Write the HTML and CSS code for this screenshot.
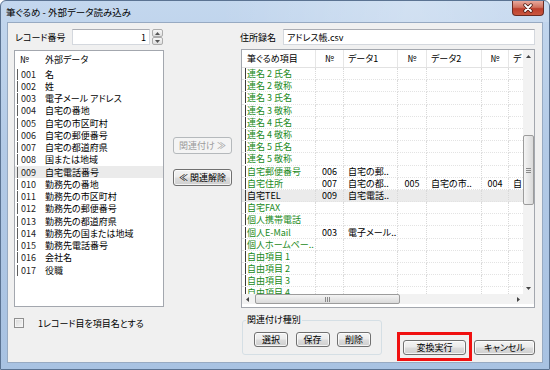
FILE: index.html
```html
<!DOCTYPE html>
<html>
<head>
	<meta charset="UTF-8">
	<title>筆ぐるめ - 外部データ読み込み</title>
	<link rel="stylesheet" href="styles.css">
</head>
<body>
<div class="window">
	<div class="titlebar">
		<span class="title">筆ぐるめ - 外部データ読み込み</span>
		<span class="close">
			<svg width="12" height="10" viewBox="0 0 12 10">
				<path d="M3 2 L9 8 M9 2 L3 8" stroke="#4a1c14" stroke-width="3.4" stroke-linecap="round"/>
				<path d="M3 2 L9 8 M9 2 L3 8" stroke="#fff" stroke-width="1.8" stroke-linecap="round"/>
			</svg>
		</span>
	</div>
	<div class="client">
		<div class="left">
			<div class="field-row">
				<span class="label">レコード番号</span>
				<span class="textbox num">1</span>
				<span class="spin">
					<span class="spin-btn"><svg width="5" height="3" viewBox="0 0 5 3"><path d="M0 3 L2.5 0 L5 3 Z" fill="#555"/></svg></span>
					<span class="spin-btn"><svg width="5" height="3" viewBox="0 0 5 3"><path d="M0 0 L2.5 3 L5 0 Z" fill="#555"/></svg></span>
				</span>
			</div>
			<div class="listbox">
				<div class="list-head"><span class="c-no">№</span><span>外部データ</span></div>
				<div class="list-row"><span class="c-no">001</span><span>名</span></div>
				<div class="list-row"><span class="c-no">002</span><span>姓</span></div>
				<div class="list-row"><span class="c-no">003</span><span>電子メール アドレス</span></div>
				<div class="list-row"><span class="c-no">004</span><span>自宅の番地</span></div>
				<div class="list-row"><span class="c-no">005</span><span>自宅の市区町村</span></div>
				<div class="list-row"><span class="c-no">006</span><span>自宅の郵便番号</span></div>
				<div class="list-row"><span class="c-no">007</span><span>自宅の都道府県</span></div>
				<div class="list-row"><span class="c-no">008</span><span>国または地域</span></div>
				<div class="list-row sel"><span class="c-no">009</span><span>自宅電話番号</span></div>
				<div class="list-row"><span class="c-no">010</span><span>勤務先の番地</span></div>
				<div class="list-row"><span class="c-no">011</span><span>勤務先の市区町村</span></div>
				<div class="list-row"><span class="c-no">012</span><span>勤務先の郵便番号</span></div>
				<div class="list-row"><span class="c-no">013</span><span>勤務先の都道府県</span></div>
				<div class="list-row"><span class="c-no">014</span><span>勤務先の国または地域</span></div>
				<div class="list-row"><span class="c-no">015</span><span>勤務先電話番号</span></div>
				<div class="list-row"><span class="c-no">016</span><span>会社名</span></div>
				<div class="list-row"><span class="c-no">017</span><span>役職</span></div>
			</div>
			<div class="check-row">
				<span class="checkbox"></span>
				<span>1レコード目を項目名とする</span>
			</div>
		</div>

		<div class="middle">
			<button type="button" class="btn disabled">関連付け ≫</button>
			<button type="button" class="btn">≪ 関連解除</button>
		</div>

		<div class="right">
			<div class="field-row">
				<span class="label">住所録名</span>
				<span class="textbox wide">アドレス帳.csv</span>
			</div>
			<div class="grid">
				<div class="view">
					<div class="ghead">
						<span class="cell w1 first">筆ぐるめ項目</span>
						<span class="cell w2">№</span>
						<span class="cell w3">データ1</span>
						<span class="cell w4">№</span>
						<span class="cell w5">データ2</span>
						<span class="cell w6">№</span>
						<span class="cell w7">デ</span>
					</div>
					<div class="grow"><span class="cell w1"><span class="name">連名 2 氏名</span></span><span class="cell w2"></span><span class="cell w3"></span><span class="cell w4"></span><span class="cell w5"></span><span class="cell w6"></span><span class="cell w7"></span></div>
					<div class="grow"><span class="cell w1"><span class="name">連名 2 敬称</span></span><span class="cell w2"></span><span class="cell w3"></span><span class="cell w4"></span><span class="cell w5"></span><span class="cell w6"></span><span class="cell w7"></span></div>
					<div class="grow"><span class="cell w1"><span class="name">連名 3 氏名</span></span><span class="cell w2"></span><span class="cell w3"></span><span class="cell w4"></span><span class="cell w5"></span><span class="cell w6"></span><span class="cell w7"></span></div>
					<div class="grow"><span class="cell w1"><span class="name">連名 3 敬称</span></span><span class="cell w2"></span><span class="cell w3"></span><span class="cell w4"></span><span class="cell w5"></span><span class="cell w6"></span><span class="cell w7"></span></div>
					<div class="grow"><span class="cell w1"><span class="name">連名 4 氏名</span></span><span class="cell w2"></span><span class="cell w3"></span><span class="cell w4"></span><span class="cell w5"></span><span class="cell w6"></span><span class="cell w7"></span></div>
					<div class="grow"><span class="cell w1"><span class="name">連名 4 敬称</span></span><span class="cell w2"></span><span class="cell w3"></span><span class="cell w4"></span><span class="cell w5"></span><span class="cell w6"></span><span class="cell w7"></span></div>
					<div class="grow"><span class="cell w1"><span class="name">連名 5 氏名</span></span><span class="cell w2"></span><span class="cell w3"></span><span class="cell w4"></span><span class="cell w5"></span><span class="cell w6"></span><span class="cell w7"></span></div>
					<div class="grow"><span class="cell w1"><span class="name">連名 5 敬称</span></span><span class="cell w2"></span><span class="cell w3"></span><span class="cell w4"></span><span class="cell w5"></span><span class="cell w6"></span><span class="cell w7"></span></div>
					<div class="grow"><span class="cell w1"><span class="name">自宅郵便番号</span></span><span class="cell w2">006</span><span class="cell w3">自宅の郵..</span><span class="cell w4"></span><span class="cell w5"></span><span class="cell w6"></span><span class="cell w7"></span></div>
					<div class="grow"><span class="cell w1"><span class="name">自宅住所</span></span><span class="cell w2">007</span><span class="cell w3">自宅の都..</span><span class="cell w4">005</span><span class="cell w5">自宅の市..</span><span class="cell w6">004</span><span class="cell w7">自</span></div>
					<div class="grow sel"><span class="cell w1"><span class="name">自宅TEL</span></span><span class="cell w2">009</span><span class="cell w3">自宅電話..</span><span class="cell w4"></span><span class="cell w5"></span><span class="cell w6"></span><span class="cell w7"></span></div>
					<div class="grow"><span class="cell w1"><span class="name">自宅FAX</span></span><span class="cell w2"></span><span class="cell w3"></span><span class="cell w4"></span><span class="cell w5"></span><span class="cell w6"></span><span class="cell w7"></span></div>
					<div class="grow"><span class="cell w1"><span class="name">個人携帯電話</span></span><span class="cell w2"></span><span class="cell w3"></span><span class="cell w4"></span><span class="cell w5"></span><span class="cell w6"></span><span class="cell w7"></span></div>
					<div class="grow"><span class="cell w1"><span class="name">個人E-Mail</span></span><span class="cell w2">003</span><span class="cell w3">電子メール..</span><span class="cell w4"></span><span class="cell w5"></span><span class="cell w6"></span><span class="cell w7"></span></div>
					<div class="grow"><span class="cell w1"><span class="name">個人ホームペー..</span></span><span class="cell w2"></span><span class="cell w3"></span><span class="cell w4"></span><span class="cell w5"></span><span class="cell w6"></span><span class="cell w7"></span></div>
					<div class="grow"><span class="cell w1"><span class="name">自由項目 1</span></span><span class="cell w2"></span><span class="cell w3"></span><span class="cell w4"></span><span class="cell w5"></span><span class="cell w6"></span><span class="cell w7"></span></div>
					<div class="grow"><span class="cell w1"><span class="name">自由項目 2</span></span><span class="cell w2"></span><span class="cell w3"></span><span class="cell w4"></span><span class="cell w5"></span><span class="cell w6"></span><span class="cell w7"></span></div>
					<div class="grow"><span class="cell w1"><span class="name">自由項目 3</span></span><span class="cell w2"></span><span class="cell w3"></span><span class="cell w4"></span><span class="cell w5"></span><span class="cell w6"></span><span class="cell w7"></span></div>
					<div class="grow"><span class="cell w1"><span class="name">自由項目 4</span></span><span class="cell w2"></span><span class="cell w3"></span><span class="cell w4"></span><span class="cell w5"></span><span class="cell w6"></span><span class="cell w7"></span></div>
				</div>
				<div class="vscroll">
					<span class="sb-btn"><svg width="5" height="3" viewBox="0 0 5 3"><path d="M0 3 L2.5 0 L5 3 Z" fill="#444"/></svg></span>
					<span class="sb-track">
						<span class="vthumb"><svg width="5" height="5" viewBox="0 0 5 5"><path d="M0 0.5 H5 M0 2.5 H5 M0 4.5 H5" stroke="#8a8a8a" stroke-width="1"/></svg></span>
					</span>
					<span class="sb-btn"><svg width="5" height="3" viewBox="0 0 5 3"><path d="M0 0 L2.5 3 L5 0 Z" fill="#444"/></svg></span>
				</div>
				<div class="hscroll">
					<span class="sb-btn"><svg width="3" height="5" viewBox="0 0 3 5"><path d="M3 0 L0 2.5 L3 5 Z" fill="#444"/></svg></span>
					<span class="sb-track">
						<span class="hthumb"><svg width="5" height="5" viewBox="0 0 5 5"><path d="M0.5 0 V5 M2.5 0 V5 M4.5 0 V5" stroke="#8a8a8a" stroke-width="1"/></svg></span>
					</span>
					<span class="sb-btn"><svg width="3" height="5" viewBox="0 0 3 5"><path d="M0 0 L3 2.5 L0 5 Z" fill="#444"/></svg></span>
				</div>
				<div class="corner"></div>
			</div>
			<div class="bottom">
				<div class="group">
					<span class="group-label">関連付け種別</span>
					<button type="button" class="btn small">選択</button>
					<button type="button" class="btn small">保存</button>
					<button type="button" class="btn small">削除</button>
				</div>
				<div class="highlight">
					<button type="button" class="btn exec">変換実行</button>
				</div>
				<button type="button" class="btn cancel">キャンセル</button>
			</div>
		</div>
	</div>
</div>
</body>
</html>
```

FILE: styles.css
```css
* {
	box-sizing: border-box;
}

body {
	margin: 0;
	font-family: "Noto Sans CJK JP", sans-serif;
	font-size: 9px;
	font-feature-settings: "palt";
	color: #000;
}

.window {
	width: 550px;
	height: 370px;
	border: 1px solid #5b7392;
	border-radius: 6px 6px 0 0;
	background: linear-gradient(to bottom, #c3d7ee, #b3cae6 40%, #a8c2e2);
	padding: 0 6px 6px;
	display: flex;
	flex-direction: column;
}

.titlebar {
	height: 21px;
	margin: 0 -6px;
	padding: 0 5px;
	display: flex;
	justify-content: space-between;
	background: linear-gradient(to right, rgba(255,255,255,0) 40%, rgba(255,255,255,.25) 75%, rgba(255,255,255,.1));
}

.title {
	align-self: center;
	font-size: 9.5px;
	padding-top: 1px;
}

.close {
	width: 32px;
	height: 15px;
	border: 1px solid #6a2b22;
	border-top: none;
	border-radius: 0 0 4px 4px;
	background: linear-gradient(to bottom, #e9a99c, #d0725f 45%, #bd3f2c 55%, #c9573f);
	display: flex;
	align-items: center;
	justify-content: center;
}

.client {
	flex: 1;
	background: #f0f0f0;
	border: 1px solid #97aac2;
	padding: 6px 7px 0 6px;
	display: flex;
}

.left {
	width: 150px;
	display: flex;
	flex-direction: column;
}

.middle {
	width: 76px;
	padding: 108px 0 0 9px;
	display: flex;
	flex-direction: column;
	gap: 15px;
}

.right {
	flex: 1;
	display: flex;
	flex-direction: column;
}

.field-row {
	height: 16px;
	display: flex;
	align-items: center;
}

.left .label {
	width: 58px;
	padding-left: 1px;
}

.right .label {
	width: 43px;
}

.textbox {
	height: 16px;
	background: #fff;
	border: 1px solid #d4d8de;
	border-top-color: #abadb3;
	display: flex;
	align-items: center;
	padding: 0 3px;
}

.num {
	width: 78px;
	justify-content: flex-end;
}

.wide {
	width: 252px;
}

.spin {
	width: 11px;
	height: 16px;
	margin-left: 2px;
	display: flex;
	flex-direction: column;
}

.spin-btn {
	flex: 1;
	border: 1px solid #acacac;
	border-radius: 2px;
	background: linear-gradient(to bottom, #f7f7f7, #dedede);
	display: flex;
	align-items: center;
	justify-content: center;
}

.listbox {
	margin-top: 5px;
	height: 257px;
	background: #fff;
	border: 1px solid #a3a7ae;
	overflow: hidden;
}

.list-head {
	height: 17px;
	display: flex;
	align-items: center;
}

.list-head .c-no {
	width: 30px;
	padding-left: 5px;
}

.list-row {
	height: 12.25px;
	display: flex;
	align-items: center;
	padding-left: 2px;
}

.list-row .c-no {
	width: 28px;
	height: 11px;
	line-height: 11px;
	border-left: 1px solid #5e5e5e;
	padding-left: 3px;
	color: #222;
}

.list-row.sel {
	background: #ebebeb;
}

.check-row {
	margin-top: 11px;
	height: 10px;
	display: flex;
	align-items: center;
}

.checkbox {
	width: 10px;
	height: 10px;
	border: 1px solid #8f8f8f;
	background: linear-gradient(135deg, #d8d8d8, #f7f7f7);
	box-shadow: inset 0 0 0 1px #f4f4f4;
	margin-right: 14px;
}

.btn {
	font: inherit;
	padding: 0;
	color: #000;
	border: 1px solid #707070;
	border-radius: 3px;
	background: linear-gradient(to bottom, #f3f3f3, #ebebeb 48%, #dcdcdc 52%, #cfcfcf);
	box-shadow: inset 0 0 0 1px rgba(255,255,255,.75);
	display: flex;
	align-items: center;
	justify-content: center;
	cursor: pointer;
}

.middle .btn {
	width: 59px;
	height: 17px;
}

.btn.disabled {
	border-color: #b5b9bc;
	background: #f4f4f4;
	color: #9c9c9c;
	box-shadow: none;
}

.grid {
	margin: 4px 0 0 1px;
	width: 294px;
	height: 259px;
	border: 1px solid #a3a7ae;
	background: #fff;
	padding-bottom: 3px;
	display: grid;
	grid-template-columns: 281px 11px;
	grid-template-rows: 244px 10px;
}

.view {
	overflow: hidden;
}

.ghead {
	height: 18px;
	display: flex;
	border-bottom: 1px solid #e2e2e2;
}

.ghead .cell {
	border-bottom: none;
	border-right: 1px solid #e6e6e6;
}

.ghead .first {
	padding-left: 5px;
}

.grow {
	height: 12.2px;
	display: flex;
}

.grow.sel {
	background: #ebebeb;
}

.cell {
	flex: none;
	overflow: hidden;
	white-space: nowrap;
	display: flex;
	align-items: center;
	padding-left: 4px;
	border-right: 1px dotted #d9d9d9;
	border-bottom: 1px dotted #e3e3e3;
}

.w1 { width: 74px; padding-left: 3px; }
.w2 { width: 28px; padding-left: 0; justify-content: center; }
.w3 { width: 54px; }
.w4 { width: 29px; padding-left: 0; justify-content: center; }
.w5 { width: 55px; }
.w6 { width: 27px; padding-left: 0; justify-content: center; }
.w7 { width: 40px; }

.name {
	height: 11px;
	line-height: 11px;
	border-left: 1px solid #3d3d3d;
	padding-left: 1px;
	color: #1b8a1b;
}

.sel .name {
	color: #000;
}

.vscroll {
	background: #f2f2f2;
	display: flex;
	flex-direction: column;
}

.hscroll {
	background: #f2f2f2;
	display: flex;
}

.sb-btn {
	flex: none;
	width: 11px;
	height: 12px;
	display: flex;
	align-items: center;
	justify-content: center;
}

.hscroll .sb-btn {
	width: 10px;
	height: 10px;
}

.sb-track {
	flex: 1;
	display: flex;
}

.vscroll .sb-track {
	flex-direction: column;
}

.vthumb {
	margin-top: 73px;
	height: 70px;
	border: 1px solid #9c9c9c;
	border-radius: 2px;
	background: linear-gradient(to right, #f4f4f4, #dadada);
	display: flex;
	align-items: center;
	justify-content: center;
}

.hthumb {
	margin-left: 3px;
	width: 145px;
	border: 1px solid #9c9c9c;
	border-radius: 2px;
	background: linear-gradient(to bottom, #f4f4f4, #dadada);
	display: flex;
	align-items: center;
	justify-content: center;
}

.corner {
	background: #f2f2f2;
}

.bottom {
	display: flex;
	align-items: flex-start;
}

.group {
	position: relative;
	margin: 12px 0 0 2px;
	width: 140px;
	height: 35px;
	border: 1px solid #d5dfe5;
	border-radius: 3px;
	padding: 11px 0 0 11px;
	display: flex;
	gap: 7.5px;
}

.group-label {
	position: absolute;
	top: -7px;
	left: 3px;
	padding: 0 1px;
	line-height: 12px;
	background: #f0f0f0;
}

.btn.small {
	width: 34px;
	height: 15px;
}

.highlight {
	margin: 24px 0 0 15px;
	border: 3px solid #f01010;
	padding: 5px 3px 3px;
}

.exec {
	width: 63px;
	height: 15px;
}

.cancel {
	margin: 32px 0 0 2px;
	width: 61px;
	height: 15px;
}
```
